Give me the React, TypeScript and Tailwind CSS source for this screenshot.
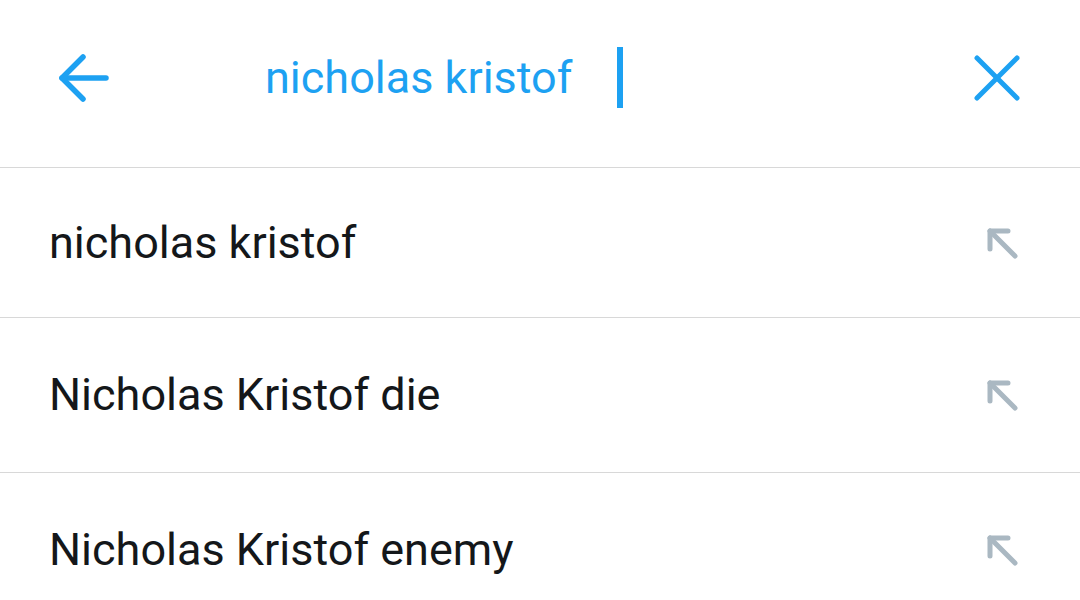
const suggestions = ["nicholas kristof", "Nicholas Kristof die", "Nicholas Kristof enemy"];

const ArrowUpLeft = () => (
  <svg width="40" height="40" viewBox="0 0 40 40" fill="none" stroke="#aab8c2" strokeWidth="5" strokeLinecap="round" strokeLinejoin="round">
    <path d="M8 8 L33 33" />
    <path d="M8 26 V8 H26" />
  </svg>
);

export default function App() {
  return (
    <div className="w-[1080px] h-[600px] bg-white overflow-hidden font-['Roboto',sans-serif]">
      <div className="h-[168px] flex items-start pt-[54px] border-b border-[#d8d8d8]">
        <div className="w-[265px] pl-[58px]">
          <svg width="52" height="50" viewBox="0 0 52 50" fill="none" stroke="#1da1f2" strokeWidth="5.5" strokeLinecap="round" strokeLinejoin="round">
            <path d="M4 24 H48" />
            <path d="M25 3 L4 24 L25 45" />
          </svg>
        </div>
        <div className="flex items-center gap-[45px] flex-1 -mt-[7px]">
          <span className="text-[45px] leading-[61px] text-[#1da1f2]">nicholas kristof</span>
          <span className="w-[6px] h-[61px] bg-[#1da1f2]" />
        </div>
        <div className="pr-[60px] pt-[1px]">
          <svg width="46" height="46" viewBox="0 0 46 46" fill="none" stroke="#1da1f2" strokeWidth="5" strokeLinecap="round">
            <path d="M3 3 L43 43" />
            <path d="M43 3 L3 43" />
          </svg>
        </div>
      </div>
      {suggestions.map((s, i) => (
        <div
          key={s}
          className={`flex items-center justify-between pl-[49px] pr-[58px] border-b border-[#d8d8d8] ${i === 0 ? "h-[150px]" : "h-[155px]"}`}
        >
          <span className="text-[45px] text-[#14171a]">{s}</span>
          <ArrowUpLeft />
        </div>
      ))}
    </div>
  );
}
